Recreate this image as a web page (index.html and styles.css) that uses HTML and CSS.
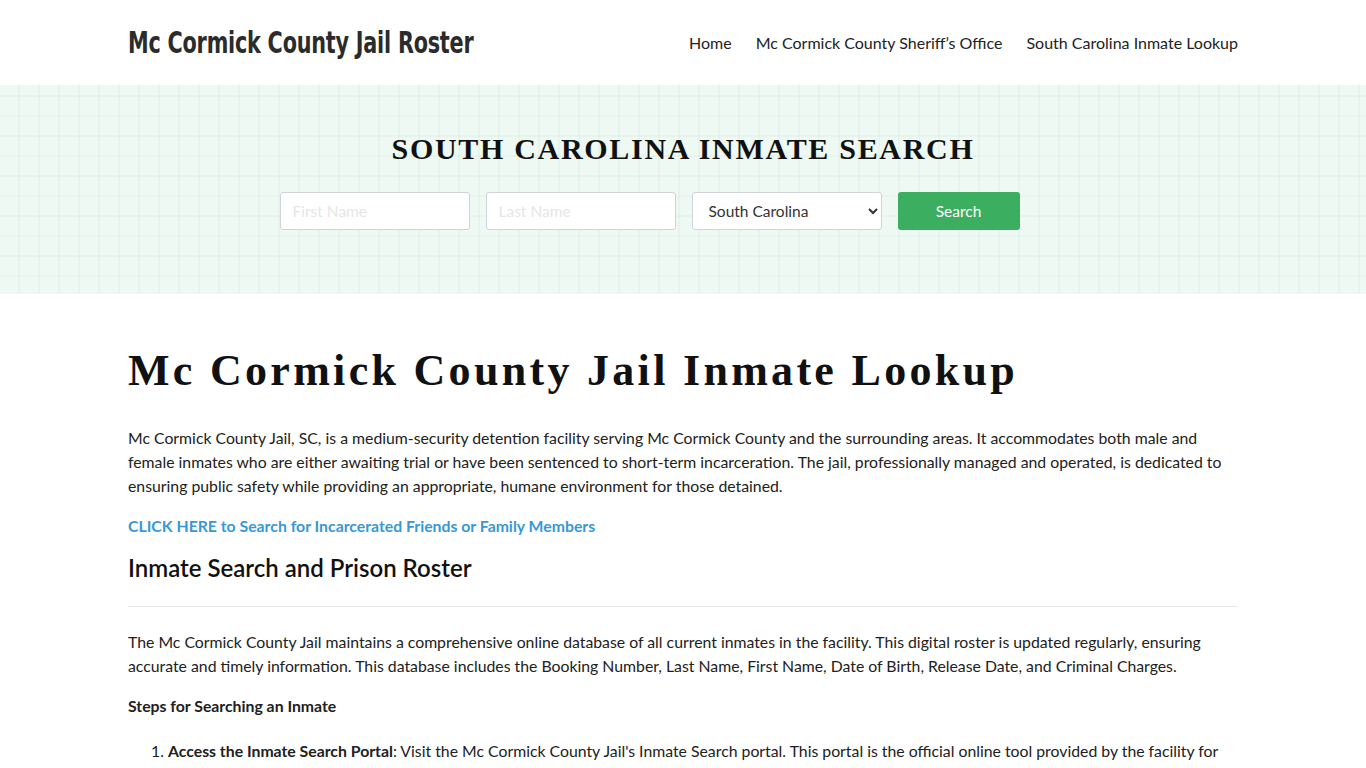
FILE: index.html
```html
<!DOCTYPE html>
<html lang="en">
<head>
<meta charset="utf-8">
<title>Mc Cormick County Jail Roster</title>
<link rel="stylesheet" href="styles.css">
</head>
<body>
<header class="topbar">
  <div class="container topbar-inner">
    <a class="brand" href="#">Mc Cormick County Jail Roster</a>
    <nav class="nav">
      <a href="#">Home</a>
      <a href="#">Mc Cormick County Sheriff’s Office</a>
      <a href="#">South Carolina Inmate Lookup</a>
    </nav>
  </div>
</header>
<section class="hero">
  <h2 class="hero-title">SOUTH CAROLINA INMATE SEARCH</h2>
  <form class="search">
    <input class="field" type="text" placeholder="First Name">
    <input class="field" type="text" placeholder="Last Name">
    <select class="field select">
      <option>South Carolina</option>
    </select>
    <button class="btn" type="button">Search</button>
  </form>
</section>
<main class="container content">
  <h1 class="page-title">Mc Cormick County Jail Inmate Lookup</h1>
  <p>Mc Cormick County Jail, SC, is a medium-security detention facility serving Mc Cormick County and the surrounding areas. It accommodates both male and female inmates who are either awaiting trial or have been sentenced to short-term incarceration. The jail, professionally managed and operated, is dedicated to ensuring public safety while providing an appropriate, humane environment for those detained.</p>
  <p class="cta"><a href="#">CLICK HERE to Search for Incarcerated Friends or Family Members</a></p>
  <h2 class="section-title">Inmate Search and Prison Roster</h2>
  <hr class="rule">
  <p>The Mc Cormick County Jail maintains a comprehensive online database of all current inmates in the facility. This digital roster is updated regularly, ensuring accurate and timely information. This database includes the Booking Number, Last Name, First Name, Date of Birth, Release Date, and Criminal Charges.</p>
  <p class="strong">Steps for Searching an Inmate</p>
  <ol class="steps">
    <li><b>Access the Inmate Search Portal</b>: Visit the Mc Cormick County Jail's Inmate Search portal. This portal is the official online tool provided by the facility for accessing inmate information.</li>
  </ol>
</main>
</body>
</html>
```
FILE: styles.css
```css
* { box-sizing: border-box; }
html, body { margin: 0; padding: 0; }
body {
  font-family: Lato, "Open Sans", sans-serif;
  font-size: 15.8px;
  color: #212121;
  background: #fff;
}
.container {
  width: 1110px;
  margin: 0 auto;
}
.topbar { height: 85px; background: #fff; }
.topbar-inner {
  height: 85px;
  display: flex;
  align-items: center;
  justify-content: space-between;
}
.brand {
  font-family: "DejaVu Sans Condensed", "DejaVu Sans", sans-serif;
  font-weight: bold;
  font-size: 30px;
  letter-spacing: -0.3px;
  color: #2b2b2b;
  text-decoration: none;
  transform: scaleX(0.77);
  transform-origin: left center;
  white-space: nowrap;
}
.nav { display: flex; gap: 24px; }
.nav a {
  font-size: 16px;
  color: #222;
  text-decoration: none;
}
.hero {
  height: 209px;
  background-color: #edf9f2;
  background-image:
    linear-gradient(to right, rgba(0,60,30,0.022) 2px, transparent 2px),
    linear-gradient(to bottom, rgba(0,60,30,0.022) 2px, transparent 2px);
  background-size: 20px 20px, 20px 20px;
  background-position: -2px 10px;
  display: flex;
  flex-direction: column;
  align-items: center;
  padding-top: 46px;
}
.hero-title {
  margin: 0;
  font-family: "Liberation Serif", "Times New Roman", serif;
  font-weight: bold;
  font-size: 30px;
  letter-spacing: 1.7px;
  color: #111;
  line-height: 36px;
}
.search {
  display: flex;
  gap: 16px;
  margin-top: 25px;
  margin-right: 67px;
}
.field {
  width: 190px;
  height: 38px;
  border: 1px solid #ced4da;
  border-radius: 3px;
  background: #fff;
  font-family: Lato, sans-serif;
  font-size: 15.5px;
  padding: 0 12px;
  color: #333;
}
.field::placeholder { color: #e6e6e6; }
.select { padding: 0 8px 0 12px; }
.btn {
  width: 122px;
  height: 38px;
  border: 0;
  border-radius: 3px;
  background: #3bae5f;
  color: #fff;
  font-family: Lato, sans-serif;
  font-size: 15.5px;
}
.content { padding-top: 51px; }
.page-title {
  margin: 0 0 29px;
  font-family: "Liberation Serif", "Times New Roman", serif;
  font-weight: bold;
  font-size: 44px;
  letter-spacing: 3.3px;
  line-height: 52px;
  color: #111;
}
.content p {
  margin: 0 0 16px;
  line-height: 24px;
}
.content p.cta { margin-bottom: 14px; }
.cta a {
  color: #3a97d6;
  font-weight: bold;
  text-decoration: none;
}
.section-title {
  margin: 0;
  font-size: 24px;
  font-weight: 600;
  line-height: 32px;
  color: #111;
}
.rule {
  border: 0;
  border-top: 1px solid #eaeaea;
  margin: 22px 0 23px;
}
.content p.strong { font-weight: bold; margin-bottom: 21px; }
.steps { margin: 0; padding-left: 40px; line-height: 24px; }
```
